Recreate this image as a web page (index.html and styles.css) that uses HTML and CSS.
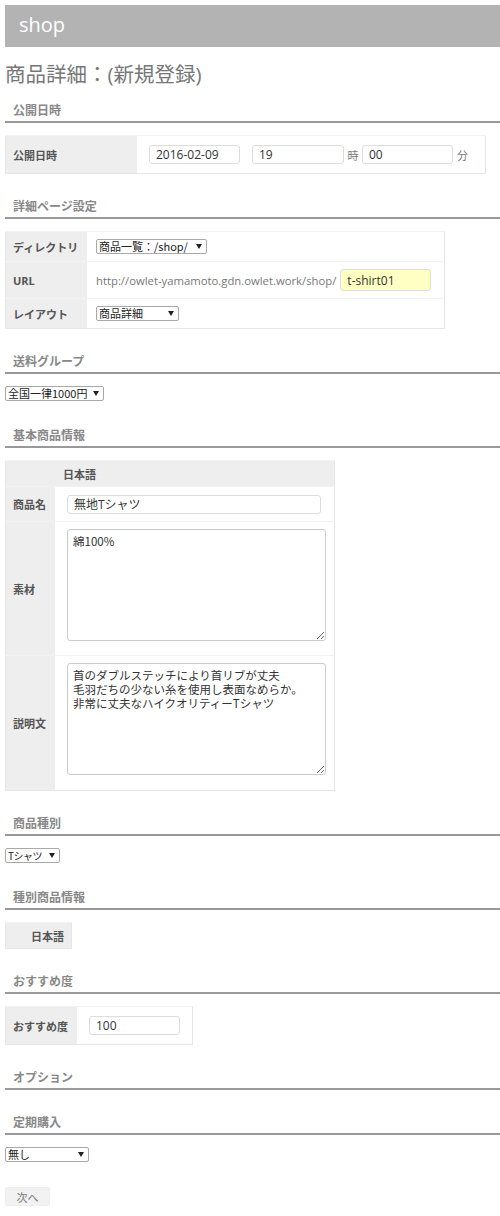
FILE: index.html
```html
<!DOCTYPE html>
<html lang="ja">
<head>
    <meta charset="UTF-8">
    <meta name="viewport" content="width=device-width, initial-scale=1.0">
    <title>商品詳細</title>
    <link rel="stylesheet" href="styles.css">
</head>
<body>
    <div class="header">shop</div>

    <h1 class="page-title">商品詳細：(新規登録)</h1>

    <form id="itemForm">
        <h2 class="sec-title">公開日時</h2>
        <table class="tbl tbl-publish">
            <tr>
                <th class="w140">公開日時</th>
                <td>
                    <div class="dt-row">
                        <input type="text" class="inp w91" value="2016-02-09">
                        <input type="text" class="inp w92 ml12" value="19">
                        <span class="unit">時</span>
                        <input type="text" class="inp w91" value="00">
                        <span class="unit unit-end">分</span>
                    </div>
                </td>
            </tr>
        </table>

        <h2 class="sec-title">詳細ページ設定</h2>
        <table class="tbl tbl-detail">
            <tr class="h30">
                <th class="w81">ディレクトリ</th>
                <td><span class="sel w111"><select><option>商品一覧：/shop/</option></select></span></td>
            </tr>
            <tr class="h37">
                <th>URL</th>
                <td><span class="url">http://owlet-yamamoto.gdn.owlet.work/shop/</span><input type="text" class="inp inp-yellow w91" value="t-shirt01"></td>
            </tr>
            <tr class="h30">
                <th>レイアウト</th>
                <td><span class="sel w83"><select><option>商品詳細</option></select></span></td>
            </tr>
        </table>

        <h2 class="sec-title">送料グループ</h2>
        <span class="sel w99"><select><option>全国一律1000円</option></select></span>

        <h2 class="sec-title">基本商品情報</h2>
        <table class="tbl tbl-basic">
            <tr class="head-row">
                <th class="w49"></th>
                <th class="lang">日本語</th>
            </tr>
            <tr class="h36">
                <th>商品名</th>
                <td><input type="text" class="inp w254" value="無地Tシャツ"></td>
            </tr>
            <tr class="h134">
                <th>素材</th>
                <td class="top"><textarea class="area">綿100%</textarea></td>
            </tr>
            <tr class="h135">
                <th>説明文</th>
                <td class="top"><textarea class="area">首のダブルステッチにより首リブが丈夫
毛羽だちの少ない糸を使用し表面なめらか。
非常に丈夫なハイクオリティーTシャツ</textarea></td>
            </tr>
        </table>

        <h2 class="sec-title">商品種別</h2>
        <span class="sel w55"><select class="tight"><option>Tシャツ</option></select></span>

        <h2 class="sec-title">種別商品情報</h2>
        <table class="tbl tbl-kind">
            <tr>
                <th class="w17"></th>
                <th class="lang">日本語</th>
            </tr>
        </table>

        <h2 class="sec-title">おすすめ度</h2>
        <table class="tbl tbl-rec">
            <tr>
                <th class="w71">おすすめ度</th>
                <td><input type="text" class="inp w91" value="100"></td>
            </tr>
        </table>

        <h2 class="sec-title">オプション</h2>

        <h2 class="sec-title">定期購入</h2>
        <span class="sel w84"><select><option>無し</option></select></span>

        <div class="actions">
            <button type="submit" class="btn">次へ</button>
        </div>
    </form>
</body>
</html>
```

FILE: styles.css
```css
body {
    margin: 5px 0 0 5px;
    font-family: "Open Sans", "Noto Sans CJK JP", sans-serif;
    color: #333;
    background: #fff;
}
.header {
    height: 42px;
    line-height: 40px;
    background: #b3b3b3;
    color: #fff;
    font-size: 20px;
    padding-left: 14px;
}
.page-title {
    margin: 14px 0 0;
    font-size: 20.5px;
    line-height: 26px;
    font-weight: normal;
    color: #777;
}
.sec-title {
    margin: 16px 0 12px;
    padding: 0 8px 2px;
    line-height: 16px;
    font-size: 12px;
    font-weight: bold;
    color: #888;
    border-bottom: 2px solid #999;
}
.sec-title + .sec-title,
table + .sec-title {
    margin-top: 25px;
}
.sel + .sec-title {
    margin-top: 27px;
}

/* tables */
.tbl {
    border-collapse: collapse;
    border: 1px solid #e6e6e6;
    font-size: 11px;
}
.tbl th {
    background: #eee;
    color: #555;
    font-weight: bold;
    text-align: left;
    padding: 0 7px;
    white-space: nowrap;
    border-top: 1px solid #f2f2f2;
}
.tbl td {
    padding: 0 12px;
    border-top: 1px solid #f2f2f2;
    white-space: nowrap;
}
.tbl td.top {
    vertical-align: top;
    padding-top: 7px;
}
.tbl-publish { width: 481px; }
.tbl-publish td { height: 37px; }
.tbl-detail { width: 440px; }
.tbl-detail td { padding: 0 9px; }
.tbl-basic { width: 330px; }
.tbl-basic td { padding: 0 8px 0 12px; vertical-align: middle; }
.tbl-kind th { height: 25px; }
.tbl-rec { width: 188px; }
.tbl-rec td { height: 37px; }

.h30 td, .h30 th { height: 29px; }
.h36 td, .h36 th { height: 34px; }
.h37 td, .h37 th { height: 36px; }
.h134 td, .h134 th { height: 133px; }
.h135 td, .h135 th { height: 134px; }
.tbl td.top { height: auto; }
.head-row th { height: 25px; }
.tbl .lang { padding-left: 8px; }

.w17 { width: 1px; padding: 0 8px !important; }
.w49 { width: 35px; }
.w71 { width: 57px; }
.w81 { width: 67px; }
.w140 { width: 126px; }

/* inputs */
.dt-row {
    display: flex;
    align-items: center;
}
.inp {
    box-sizing: border-box;
    height: 19px;
    padding: 0 6px;
    border: 1px solid #ddd;
    border-radius: 3px;
    font-family: inherit;
    font-size: 12px;
    color: #333;
    vertical-align: middle;
}
.inp-yellow {
    height: 22px;
    background: #ffffc4;
    margin-left: 4px;
}
.w91 { width: 91px; }
.w92 { width: 92px; }
.w254 { width: 254px; }
.ml12 { margin-left: 12px; }
.unit {
    width: 18px;
    text-align: center;
    color: #777;
    font-size: 11px;
}
.unit-end {
    width: 16px;
    margin-left: 4px;
    text-align: left;
}
.url {
    color: #777;
    font-size: 11.3px;
    vertical-align: middle;
}
.area {
    box-sizing: border-box;
    display: block;
    width: 259px;
    height: 112px;
    padding: 4px 5px;
    border: 1px solid #ccc;
    border-radius: 3px;
    font-family: "Noto Sans CJK JP", sans-serif;
    font-size: 11.5px;
    line-height: 14px;
    color: #333;
    resize: both;
}

/* selects */
.sel {
    position: relative;
    display: block;
}
.sel select {
    appearance: none;
    -webkit-appearance: none;
    box-sizing: border-box;
    width: 100%;
    height: 15px;
    padding: 0 12px 0 2px;
    border: 1px solid #a9a9a9;
    border-radius: 2px;
    background: #fff;
    font-family: "Noto Sans CJK JP", sans-serif;
    font-size: 11px;
    line-height: 13px;
    color: #222;
    display: block;
}
.sel select.tight {
    font-size: 10px;
    letter-spacing: -0.5px;
}
.sel::after {
    content: "";
    position: absolute;
    right: 5px;
    top: 5px;
    border-left: 3px solid transparent;
    border-right: 3px solid transparent;
    border-top: 5px solid #222;
    pointer-events: none;
}
.w55 { width: 55px; }
.w83 { width: 83px; }
.w84 { width: 84px; }
.w99 { width: 99px; }
.w111 { width: 111px; }

.actions {
    margin-top: 25px;
}
.btn {
    display: block;
    width: 45px;
    height: 19px;
    padding: 0;
    border: 1px solid #eee;
    border-radius: 2px;
    background: #f2f2f2;
    color: #777;
    font-family: "Noto Sans CJK JP", sans-serif;
    font-size: 11px;
    cursor: pointer;
}
```
